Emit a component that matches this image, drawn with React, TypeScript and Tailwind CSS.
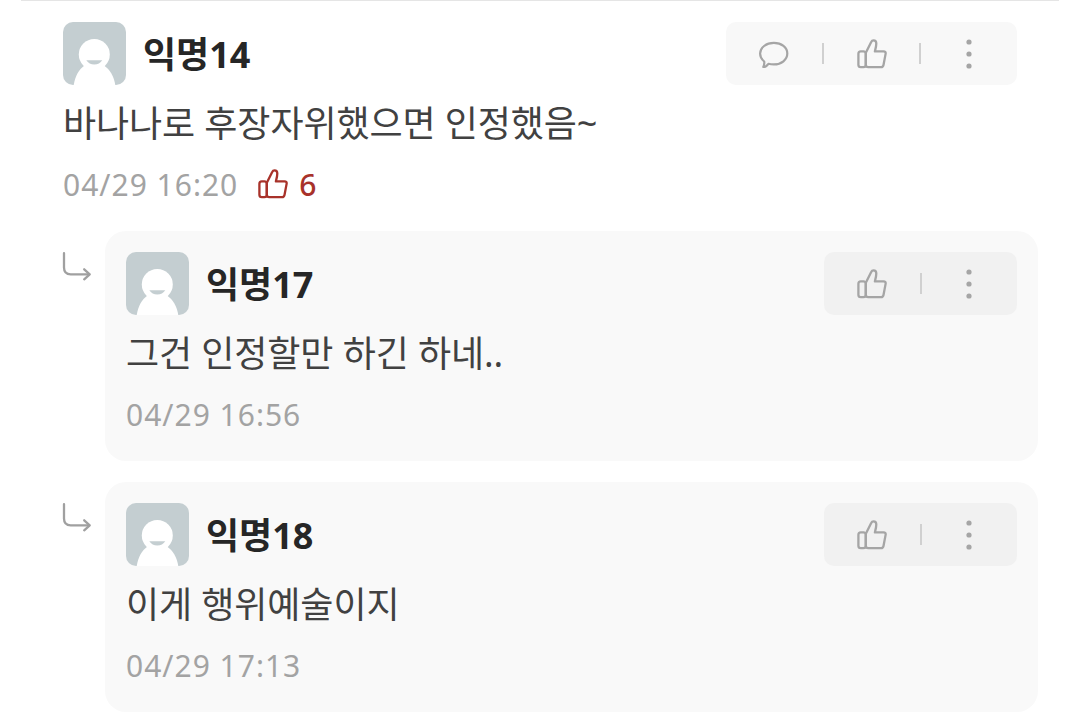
interface CommentData {
  name: string;
  text: string;
  date: string;
  likes?: number;
}

const comment: CommentData = {
  name: "익명14",
  text: "바나나로 후장자위했으면 인정했음~",
  date: "04/29 16:20",
  likes: 6,
};

const replies: CommentData[] = [
  { name: "익명17", text: "그건 인정할만 하긴 하네..", date: "04/29 16:56" },
  { name: "익명18", text: "이게 행위예술이지", date: "04/29 17:13" },
];

function Avatar() {
  return (
    <svg viewBox="0 0 63 63" className="size-[63px] shrink-0 rounded-[10px] bg-[#c4ced1]">
      <circle cx="31.3" cy="32.5" r="15.5" fill="#fff" />
      <path d="M21.5 43.5h19.5c6 4 10 11 11.3 19.5H10.7c1.3-8.5 5-15.5 10.8-19.5Z" fill="#fff" />
      <path d="M23.3 38.2h16c-1.8 2.8-4.6 4.2-8 4.2s-6.2-1.4-8-4.2Z" fill="#c4ced1" />
    </svg>
  );
}

function ThumbIcon() {
  return (
    <svg viewBox="0 0 30 30" className="size-[30px] shrink-0" fill="none" stroke="currentColor" strokeWidth="2.3" strokeLinejoin="round">
      <path d="M3.8 12.3h2.6a2.4 2.4 0 0 1 2.4 2.4v11.1a2.4 2.4 0 0 1-2.4 2.4H3.800a2.400 2.400 0 0 1-2.400-2.400V14.700a2.400 2.400 0 0 1 2.400-2.400Z" />
      <path d="M9.200 12.900 14.200 3c.6-1.300 1.300-1.700 2.300-1.700 1.800 0 2.800 1.200 2.800 3.100 0 2.600-.7 5.200-1.400 8h8.600c1.700 0 2.400.9 2.100 2.500l-2.100 11.100c-.3 1.500-1.100 2.200-2.500 2.200H11.300c-1.600 0-2.500-.8-2.500-2.400V14.400c0-.6.1-1 .4-1.500Z" />
    </svg>
  );
}

function BubbleIcon() {
  return (
    <svg viewBox="0 0 30 30" className="size-[30px]" fill="none" stroke="currentColor" strokeWidth="2.2" strokeLinejoin="round">
      <path d="M14.900 3.900C7.200 3.900 1.100 8.600 1.100 14.600c0 3.600 1.700 6 4.100 7.900.3 2.300-.1 3.900-.9 5.500 2.200-.1 3.800-1.300 5.100-3.200 1.700.4 3.500.6 5.500.6 7.600 0 13.400-4.700 13.400-10.800S22.500 3.900 14.900 3.900Z" />
    </svg>
  );
}

function MoreIcon() {
  return (
    <svg viewBox="0 0 30 30" className="size-[30px]" fill="currentColor">
      <circle cx="15" cy="3" r="2.6" />
      <circle cx="15" cy="15" r="2.6" />
      <circle cx="15" cy="27" r="2.6" />
    </svg>
  );
}

function ReplyArrow() {
  return (
    <svg viewBox="0 0 30 30" className="mt-[21px] size-[30px] shrink-0 text-[#a0a0a0]" fill="none" stroke="currentColor" strokeWidth="2.3" strokeLinecap="round" strokeLinejoin="round">
      <path d="M2 1.2v14.3c0 4.500 2 6.800 6.700 6.800h18.500" />
      <path d="m22.200 17.300 5.500 5-5.500 5" />
    </svg>
  );
}

function Divider() {
  return <div className="h-[21px] w-[2px] shrink-0 bg-[#d0d0d0]" />;
}

function Actions({ reply }: { reply?: boolean }) {
  return (
    <div
      className={
        reply
          ? "flex h-[63px] w-[193px] items-center rounded-[10px] bg-[#f1f1f1] text-[#a5a5a5]"
          : "flex h-[63px] w-[291px] items-center rounded-[10px] bg-[#f8f8f8] text-[#a5a5a5]"
      }
    >
      {!reply && (
        <>
          <button className="flex flex-1 justify-center" aria-label="답글">
            <BubbleIcon />
          </button>
          <Divider />
        </>
      )}
      <button className="flex flex-1 justify-center" aria-label="추천">
        <ThumbIcon />
      </button>
      <Divider />
      <button className="flex flex-1 justify-center" aria-label="더보기">
        <MoreIcon />
      </button>
    </div>
  );
}

function Comment({ data, reply }: { data: CommentData; reply?: boolean }) {
  return (
    <>
      <div className="flex items-center">
        <Avatar />
        <span className="ml-[17px] flex-1 pt-0.5 text-4xl leading-none font-bold text-[#262626]">{data.name}</span>
        <Actions reply={reply} />
      </div>
      <p className="mt-3 text-4xl leading-[54px] tracking-[-0.1px] text-[#414141]">{data.text}</p>
      <div className="mt-1.5 flex h-[54px] items-center text-[30px] leading-none text-[#a3a3a3]">
        <span className="pt-0.5 tracking-[1px]">{data.date}</span>
        {data.likes && (
          <span className="ml-5 flex items-center gap-[11px] font-medium text-[#a8322a]">
            <ThumbIcon />
            <span className="pt-0.5">{data.likes}</span>
          </span>
        )}
      </div>
    </>
  );
}

export default function App() {
  return (
    <div className="h-[728px] w-[1071px] overflow-hidden bg-white font-['Noto_Sans','Noto_Sans_CJK_KR',sans-serif]">
      <div className="mr-3 ml-[21px] border-t border-[#e5e5e5] pt-[21px]">
        <div className="h-[209px] pr-[42px] pl-[42px]">
          <Comment data={comment} />
        </div>
        <div className="flex flex-col gap-[21px] pr-[21px] pl-[41px]">
          {replies.map((r) => (
            <div key={r.name} className="flex gap-[13px]">
              <ReplyArrow />
              <div className="h-[230px] flex-1 rounded-[21px] bg-[#f9f9f9] p-[21px]">
                <Comment data={r} reply />
              </div>
            </div>
          ))}
        </div>
      </div>
    </div>
  );
}
